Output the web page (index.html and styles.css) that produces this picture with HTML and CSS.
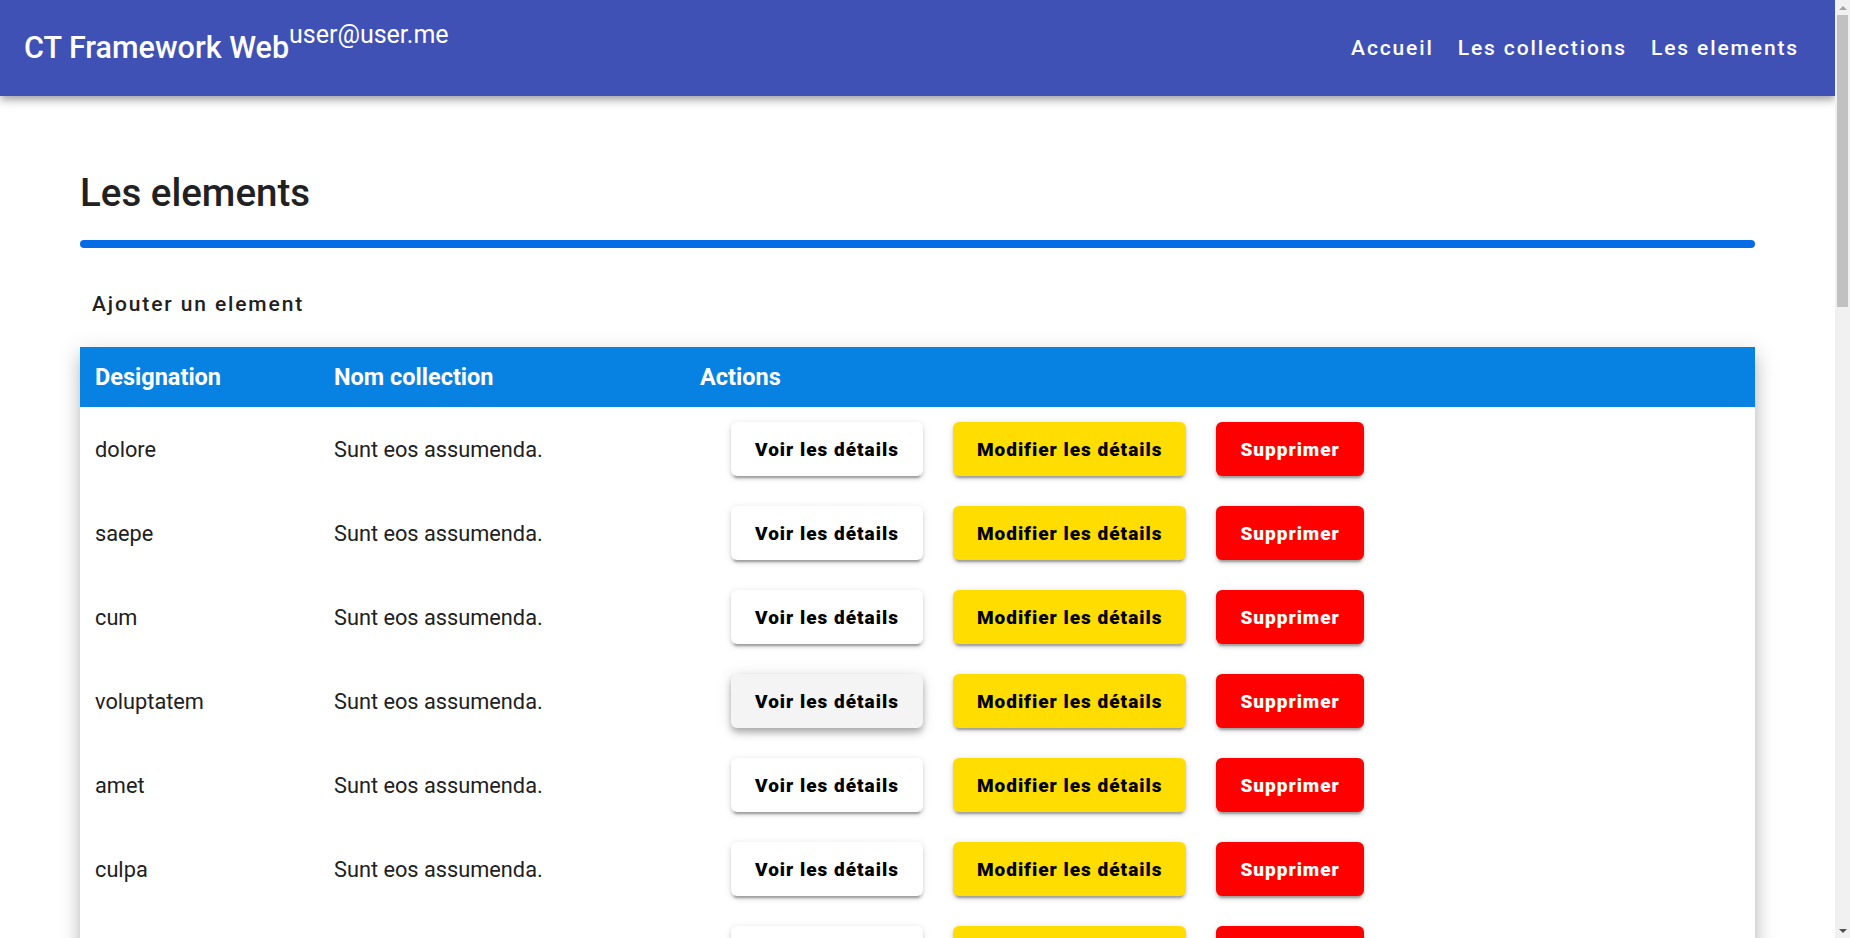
FILE: index.html
```html
<!DOCTYPE html>
<html lang="fr">
<head>
<meta charset="utf-8">
<title>CT Framework Web</title>
<link rel="stylesheet" href="styles.css">
</head>
<body>
<div class="page">
  <header class="toolbar">
    <div class="brand">CT Framework Web<sup class="user">user@user.me</sup></div>
    <nav class="nav">
      <a class="nav-link" href="#">Accueil</a>
      <a class="nav-link" href="#">Les collections</a>
      <a class="nav-link" href="#">Les elements</a>
    </nav>
  </header>
  <main class="container">
    <h1 class="page-title">Les elements</h1>
    <div class="title-bar"></div>
    <button class="text-btn">Ajouter un element</button>
    <table class="data-table">
      <thead>
        <tr><th class="col-des">Designation</th><th class="col-col">Nom collection</th><th>Actions</th></tr>
      </thead>
      <tbody>
        <tr><td>dolore</td><td>Sunt eos assumenda.</td><td><div class="actions"><button class="btn btn-white">Voir les détails</button><button class="btn btn-yellow">Modifier les détails</button><button class="btn btn-red">Supprimer</button></div></td></tr>
        <tr><td>saepe</td><td>Sunt eos assumenda.</td><td><div class="actions"><button class="btn btn-white">Voir les détails</button><button class="btn btn-yellow">Modifier les détails</button><button class="btn btn-red">Supprimer</button></div></td></tr>
        <tr><td>cum</td><td>Sunt eos assumenda.</td><td><div class="actions"><button class="btn btn-white">Voir les détails</button><button class="btn btn-yellow">Modifier les détails</button><button class="btn btn-red">Supprimer</button></div></td></tr>
        <tr><td>voluptatem</td><td>Sunt eos assumenda.</td><td><div class="actions"><button class="btn btn-white is-hover">Voir les détails</button><button class="btn btn-yellow">Modifier les détails</button><button class="btn btn-red">Supprimer</button></div></td></tr>
        <tr><td>amet</td><td>Sunt eos assumenda.</td><td><div class="actions"><button class="btn btn-white">Voir les détails</button><button class="btn btn-yellow">Modifier les détails</button><button class="btn btn-red">Supprimer</button></div></td></tr>
        <tr><td>culpa</td><td>Sunt eos assumenda.</td><td><div class="actions"><button class="btn btn-white">Voir les détails</button><button class="btn btn-yellow">Modifier les détails</button><button class="btn btn-red">Supprimer</button></div></td></tr>
        <tr><td>quia</td><td>Sunt eos assumenda.</td><td><div class="actions"><button class="btn btn-white">Voir les détails</button><button class="btn btn-yellow">Modifier les détails</button><button class="btn btn-red">Supprimer</button></div></td></tr>
        <tr><td>natus</td><td>Sunt eos assumenda.</td><td><div class="actions"><button class="btn btn-white">Voir les détails</button><button class="btn btn-yellow">Modifier les détails</button><button class="btn btn-red">Supprimer</button></div></td></tr>
        <tr><td>veniam</td><td>Sunt eos assumenda.</td><td><div class="actions"><button class="btn btn-white">Voir les détails</button><button class="btn btn-yellow">Modifier les détails</button><button class="btn btn-red">Supprimer</button></div></td></tr>
        <tr><td>labore</td><td>Sunt eos assumenda.</td><td><div class="actions"><button class="btn btn-white">Voir les détails</button><button class="btn btn-yellow">Modifier les détails</button><button class="btn btn-red">Supprimer</button></div></td></tr>
        <tr><td>omnis</td><td>Sunt eos assumenda.</td><td><div class="actions"><button class="btn btn-white">Voir les détails</button><button class="btn btn-yellow">Modifier les détails</button><button class="btn btn-red">Supprimer</button></div></td></tr>
        <tr><td>minima</td><td>Sunt eos assumenda.</td><td><div class="actions"><button class="btn btn-white">Voir les détails</button><button class="btn btn-yellow">Modifier les détails</button><button class="btn btn-red">Supprimer</button></div></td></tr>
        <tr><td>earum</td><td>Sunt eos assumenda.</td><td><div class="actions"><button class="btn btn-white">Voir les détails</button><button class="btn btn-yellow">Modifier les détails</button><button class="btn btn-red">Supprimer</button></div></td></tr>
        <tr><td>dicta</td><td>Sunt eos assumenda.</td><td><div class="actions"><button class="btn btn-white">Voir les détails</button><button class="btn btn-yellow">Modifier les détails</button><button class="btn btn-red">Supprimer</button></div></td></tr>
        <tr><td>eius</td><td>Sunt eos assumenda.</td><td><div class="actions"><button class="btn btn-white">Voir les détails</button><button class="btn btn-yellow">Modifier les détails</button><button class="btn btn-red">Supprimer</button></div></td></tr>
        <tr><td>fugit</td><td>Sunt eos assumenda.</td><td><div class="actions"><button class="btn btn-white">Voir les détails</button><button class="btn btn-yellow">Modifier les détails</button><button class="btn btn-red">Supprimer</button></div></td></tr>
        <tr><td>rerum</td><td>Sunt eos assumenda.</td><td><div class="actions"><button class="btn btn-white">Voir les détails</button><button class="btn btn-yellow">Modifier les détails</button><button class="btn btn-red">Supprimer</button></div></td></tr>
        <tr><td>nihil</td><td>Sunt eos assumenda.</td><td><div class="actions"><button class="btn btn-white">Voir les détails</button><button class="btn btn-yellow">Modifier les détails</button><button class="btn btn-red">Supprimer</button></div></td></tr>
        <tr><td>porro</td><td>Sunt eos assumenda.</td><td><div class="actions"><button class="btn btn-white">Voir les détails</button><button class="btn btn-yellow">Modifier les détails</button><button class="btn btn-red">Supprimer</button></div></td></tr>
        <tr><td>ipsam</td><td>Sunt eos assumenda.</td><td><div class="actions"><button class="btn btn-white">Voir les détails</button><button class="btn btn-yellow">Modifier les détails</button><button class="btn btn-red">Supprimer</button></div></td></tr>
        <tr><td>odit</td><td>Sunt eos assumenda.</td><td><div class="actions"><button class="btn btn-white">Voir les détails</button><button class="btn btn-yellow">Modifier les détails</button><button class="btn btn-red">Supprimer</button></div></td></tr>
        <tr><td>magnam</td><td>Sunt eos assumenda.</td><td><div class="actions"><button class="btn btn-white">Voir les détails</button><button class="btn btn-yellow">Modifier les détails</button><button class="btn btn-red">Supprimer</button></div></td></tr>
        <tr><td>sequi</td><td>Sunt eos assumenda.</td><td><div class="actions"><button class="btn btn-white">Voir les détails</button><button class="btn btn-yellow">Modifier les détails</button><button class="btn btn-red">Supprimer</button></div></td></tr>
        <tr><td>quas</td><td>Sunt eos assumenda.</td><td><div class="actions"><button class="btn btn-white">Voir les détails</button><button class="btn btn-yellow">Modifier les détails</button><button class="btn btn-red">Supprimer</button></div></td></tr>
        <tr><td>tempora</td><td>Sunt eos assumenda.</td><td><div class="actions"><button class="btn btn-white">Voir les détails</button><button class="btn btn-yellow">Modifier les détails</button><button class="btn btn-red">Supprimer</button></div></td></tr>
        <tr><td>vero</td><td>Sunt eos assumenda.</td><td><div class="actions"><button class="btn btn-white">Voir les détails</button><button class="btn btn-yellow">Modifier les détails</button><button class="btn btn-red">Supprimer</button></div></td></tr>
        <tr><td>illo</td><td>Sunt eos assumenda.</td><td><div class="actions"><button class="btn btn-white">Voir les détails</button><button class="btn btn-yellow">Modifier les détails</button><button class="btn btn-red">Supprimer</button></div></td></tr>
        <tr><td>esse</td><td>Sunt eos assumenda.</td><td><div class="actions"><button class="btn btn-white">Voir les détails</button><button class="btn btn-yellow">Modifier les détails</button><button class="btn btn-red">Supprimer</button></div></td></tr>
      </tbody>
    </table>
  </main>
</div>
<div class="scrollbar" aria-hidden="true">
  <div class="sb-arrow sb-up"></div>
  <div class="sb-track"><div class="sb-thumb"></div></div>
  <div class="sb-arrow sb-down"></div>
</div>
</body>
</html>
```
FILE: styles.css
```css
html, body {
  margin: 0;
  padding: 0;
  background: #ffffff;
}

body {
  font-family: Roboto, "Noto Sans", "Liberation Sans", sans-serif;
  color: rgba(0, 0, 0, 0.87);
}

.page {
  margin-right: 15px;
}

.toolbar {
  position: relative;
  z-index: 2;
  display: flex;
  align-items: center;
  justify-content: space-between;
  height: 96px;
  padding: 0 24px;
  background: #3f51b5;
  color: #ffffff;
  box-shadow: 0 3px 6px -1.5px rgba(0, 0, 0, 0.2), 0 6px 7.5px 0 rgba(0, 0, 0, 0.14), 0 1.5px 15px 0 rgba(0, 0, 0, 0.12);
}

.brand {
  font-size: 30.5px;
  font-weight: 500;
  line-height: 32px;
  white-space: nowrap;
}

.user {
  font-size: 25px;
  font-weight: 400;
  line-height: 0;
  vertical-align: 15px;
}

.nav {
  display: flex;
  align-items: center;
}

.nav-link {
  display: flex;
  align-items: center;
  height: 54px;
  padding: 0 12px;
  color: #ffffff;
  text-decoration: none;
  font-size: 21px;
  font-weight: 500;
  letter-spacing: 1.875px;
}

.container {
  padding: 74px 80px 150px;
}

.page-title {
  margin: 0;
  font-size: 38.5px;
  font-weight: 500;
  line-height: 45px;
  color: #212121;
}

.title-bar {
  height: 8px;
  margin-top: 25px;
  border-radius: 4px;
  background: #066ce6;
}

.text-btn {
  display: block;
  height: 54px;
  margin: 29px 0 16px;
  padding: 0 12px;
  border: 0;
  background: transparent;
  font-family: inherit;
  font-size: 21px;
  font-weight: 500;
  letter-spacing: 1.875px;
  color: #212121;
  cursor: pointer;
}

.data-table {
  width: 100%;
  border-collapse: collapse;
  background: #ffffff;
  box-shadow: 0 7.5px 7.5px -4.5px rgba(0, 0, 0, 0.2), 0 12px 15px 1.5px rgba(0, 0, 0, 0.14), 0 4.5px 21px 3px rgba(0, 0, 0, 0.12);
}

.data-table th {
  height: 60px;
  padding: 0 15px;
  background: #0782e3;
  color: #ffffff;
  font-size: 23.5px;
  font-weight: 700;
  text-align: left;
}

.col-des {
  width: 209px;
}

.col-col {
  width: 336px;
}

.data-table td {
  height: 84px;
  padding: 0 15px;
  font-size: 21.75px;
  color: #212121;
  vertical-align: middle;
}

.actions {
  display: flex;
  gap: 30px;
  margin-left: 31px;
}

.btn {
  height: 54px;
  padding: 0 24px;
  border: 0;
  border-radius: 6px;
  font-family: inherit;
  font-size: 19px;
  font-weight: 900;
  letter-spacing: 1px;
  cursor: pointer;
  box-shadow: 0 4.5px 1.5px -3px rgba(0, 0, 0, 0.2), 0 3px 3px 0 rgba(0, 0, 0, 0.14), 0 1.5px 7.5px 0 rgba(0, 0, 0, 0.12);
}

.btn-white {
  background: #ffffff;
  color: #000000;
}

.btn-white.is-hover {
  background: #f4f4f4;
  box-shadow: 0 3px 6px -1.5px rgba(0, 0, 0, 0.2), 0 6px 7.5px 0 rgba(0, 0, 0, 0.14), 0 1.5px 15px 0 rgba(0, 0, 0, 0.12);
}

.btn-yellow {
  background: #ffdd00;
  color: #000000;
}

.btn-red {
  background: #ff0000;
  color: #ffffff;
}

/* simulated browser scrollbar */
.scrollbar {
  position: fixed;
  top: 0;
  right: 0;
  bottom: 0;
  z-index: 10;
  display: flex;
  flex-direction: column;
  width: 15px;
  background: #f1f1f1;
}

.sb-arrow {
  display: flex;
  align-items: center;
  justify-content: center;
  height: 15px;
}

.sb-up::before {
  content: "";
  border-left: 4px solid transparent;
  border-right: 4px solid transparent;
  border-bottom: 4px solid #a3a3a3;
}

.sb-down::before {
  content: "";
  border-left: 4px solid transparent;
  border-right: 4px solid transparent;
  border-top: 4px solid #505050;
}

.sb-track {
  flex: 1;
  padding: 0 2px;
}

.sb-thumb {
  height: 292px;
  background: #c1c1c1;
}
```
